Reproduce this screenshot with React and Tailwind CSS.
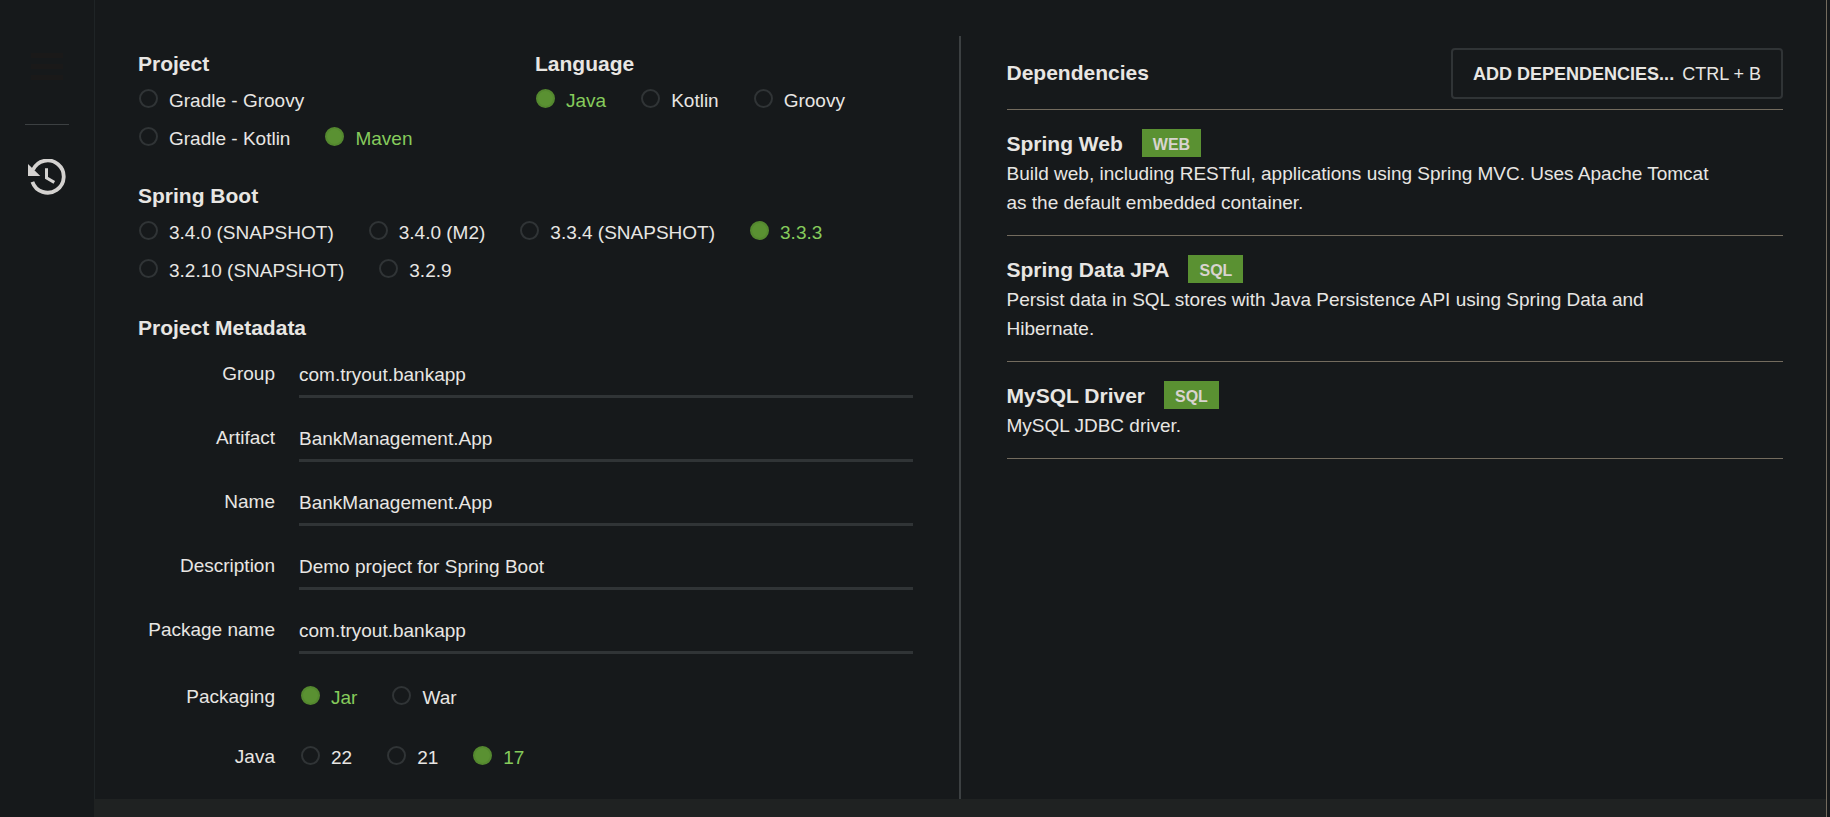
import { useState } from "react";

function RadioGroup({ name, options, initial }) {
  const [value, setValue] = useState(initial);
  return (
    <div className="flex flex-wrap gap-x-[34px]">
      {options.map((option) => (
        <label
          key={option}
          className="flex h-[38px] cursor-pointer items-start gap-[11px] pl-px text-[19px] leading-[22px] has-[:checked]:text-[#86cb5c]"
        >
          <input
            type="radio"
            name={name}
            checked={value === option}
            onChange={() => setValue(option)}
            className="size-[19px] shrink-0 appearance-none rounded-full border-2 border-[#303436] checked:border-[#54882f] checked:bg-[#5a9132]"
          />
          <span className="pt-px">{option}</span>
        </label>
      ))}
    </div>
  );
}

function Group({ title, className, ...radios }) {
  return (
    <fieldset className={className}>
      <legend className="mb-[11px] text-[21px] leading-[28px] font-bold">{title}</legend>
      <RadioGroup {...radios} />
    </fieldset>
  );
}

function TextField({ id, label, initial }) {
  const [value, setValue] = useState(initial);
  return (
    <div className="mb-5 flex gap-6">
      <label htmlFor={id} className="w-[137px] shrink-0 pt-[9px] text-right leading-[22px]">
        {label}
      </label>
      <input
        id={id}
        type="text"
        value={value}
        onChange={(event) => setValue(event.target.value)}
        className="h-11 min-w-0 flex-1 border-b-3 border-[#303436] bg-transparent pt-px outline-none"
      />
    </div>
  );
}

function RadioField({ label, ...radios }) {
  return (
    <fieldset className="mb-[22px] flex last:mb-0">
      <legend className="float-left mr-[25px] w-[137px] text-right leading-[22px]">{label}</legend>
      <RadioGroup {...radios} />
    </fieldset>
  );
}

const fields = [
  ["group", "Group", "com.tryout.bankapp"],
  ["artifact", "Artifact", "BankManagement.App"],
  ["name", "Name", "BankManagement.App"],
  ["description", "Description", "Demo project for Spring Boot"],
  ["package", "Package name", "com.tryout.bankapp"],
];

const dependencies = [
  {
    name: "Spring Web",
    tag: "WEB",
    text: "Build web, including RESTful, applications using Spring MVC. Uses Apache Tomcat as the default embedded container.",
  },
  {
    name: "Spring Data JPA",
    tag: "SQL",
    text: "Persist data in SQL stores with Java Persistence API using Spring Data and Hibernate.",
  },
  { name: "MySQL Driver", tag: "SQL", text: "MySQL JDBC driver." },
];

function Sidebar() {
  return (
    <aside className="flex w-[94px] shrink-0 flex-col items-center pt-[53px]">
      <button type="button" aria-label="Menu" className="flex h-[27px] w-8 flex-col justify-between">
        <span className="h-[5px] w-full bg-[#1a1919]" />
        <span className="h-[5px] w-full bg-[#1a1919]" />
        <span className="h-[5px] w-full bg-[#1a1919]" />
      </button>
      <hr className="mt-11 w-11 border-[#3c4042]" />
      <button type="button" aria-label="History" className="mt-[34px]">
        <svg width="38" height="36" viewBox="0 0 38 36">
          <path
            d="M4.4 22.8A16.1 16.1 0 1 0 5 10.8"
            fill="none"
            stroke="#d4d2d0"
            strokeWidth="3.8"
          />
          <path d="M0 5L12.3 17H0z" fill="#d4d2d0" />
          <path d="M18.5 9.2v9.6l7.8 4.6" fill="none" stroke="#d4d2d0" strokeWidth="3" />
        </svg>
      </button>
    </aside>
  );
}

export default function App() {
  return (
    <div className="flex min-h-screen bg-[#16191b] pr-[3px] font-['Liberation_Sans',Arial,sans-serif] text-[19px] text-[#e8e6e3]">
      <Sidebar />
      <div className="flex min-w-0 flex-1 flex-col border-r border-[#736b5e]">
        <main className="flex flex-1 border-l border-[#1f2426] pt-9">
          <form className="w-1/2 border-r-2 border-[#3c4042] pr-[46px] pl-[43px]">
            <div className="flex pt-[14px]">
              <Group
                className="w-[397px] shrink-0 pr-14"
                title="Project"
                name="project"
                options={["Gradle - Groovy", "Gradle - Kotlin", "Maven"]}
                initial="Maven"
              />
              <Group
                title="Language"
                name="language"
                options={["Java", "Kotlin", "Groovy"]}
                initial="Java"
              />
            </div>
            <Group
              className="mt-[17px]"
              title="Spring Boot"
              name="boot"
              options={[
                "3.4.0 (SNAPSHOT)",
                "3.4.0 (M2)",
                "3.3.4 (SNAPSHOT)",
                "3.3.3",
                "3.2.10 (SNAPSHOT)",
                "3.2.9",
              ]}
              initial="3.3.3"
            />
            <h2 className="mt-[17px] mb-3 text-[21px] leading-[28px] font-bold">Project Metadata</h2>
            {fields.map(([id, label, initial]) => (
              <TextField key={id} id={id} label={label} initial={initial} />
            ))}
            <div className="pt-3">
              <RadioField label="Packaging" name="packaging" options={["Jar", "War"]} initial="Jar" />
              <RadioField label="Java" name="java" options={["22", "21", "17"]} initial="17" />
            </div>
          </form>
          <section className="w-1/2 pt-3 pr-[43px] pl-[46px]">
            <div className="flex items-center justify-between border-b border-[#736b5e] pb-[10px]">
              <h2 className="pb-[2px] text-[21px] leading-[28px] font-bold">Dependencies</h2>
              <button
                type="button"
                className="flex h-[51px] items-center gap-2 rounded border-2 border-[#303436] px-5 pt-[2px] text-[18px]"
              >
                <span className="font-bold">ADD DEPENDENCIES...</span>
                <span>CTRL + B</span>
              </button>
            </div>
            <ul>
              {dependencies.map(({ name, tag, text }) => (
                <li key={name} className="border-b border-[#736b5e] pt-[19px] pb-[18px] leading-[29px]">
                  <h3 className="mb-[2px] flex h-7 items-center gap-[19px] text-[21px] font-bold">
                    {name}
                    <span className="h-7 bg-[#5a9132] px-[11px] pt-px text-[16px] text-[#d8d4cf]">{tag}</span>
                  </h3>
                  <p className="pr-[60px]">{text}</p>
                </li>
              ))}
            </ul>
          </section>
        </main>
        <footer className="h-[18px] bg-[#1f2222]" />
      </div>
    </div>
  );
}
